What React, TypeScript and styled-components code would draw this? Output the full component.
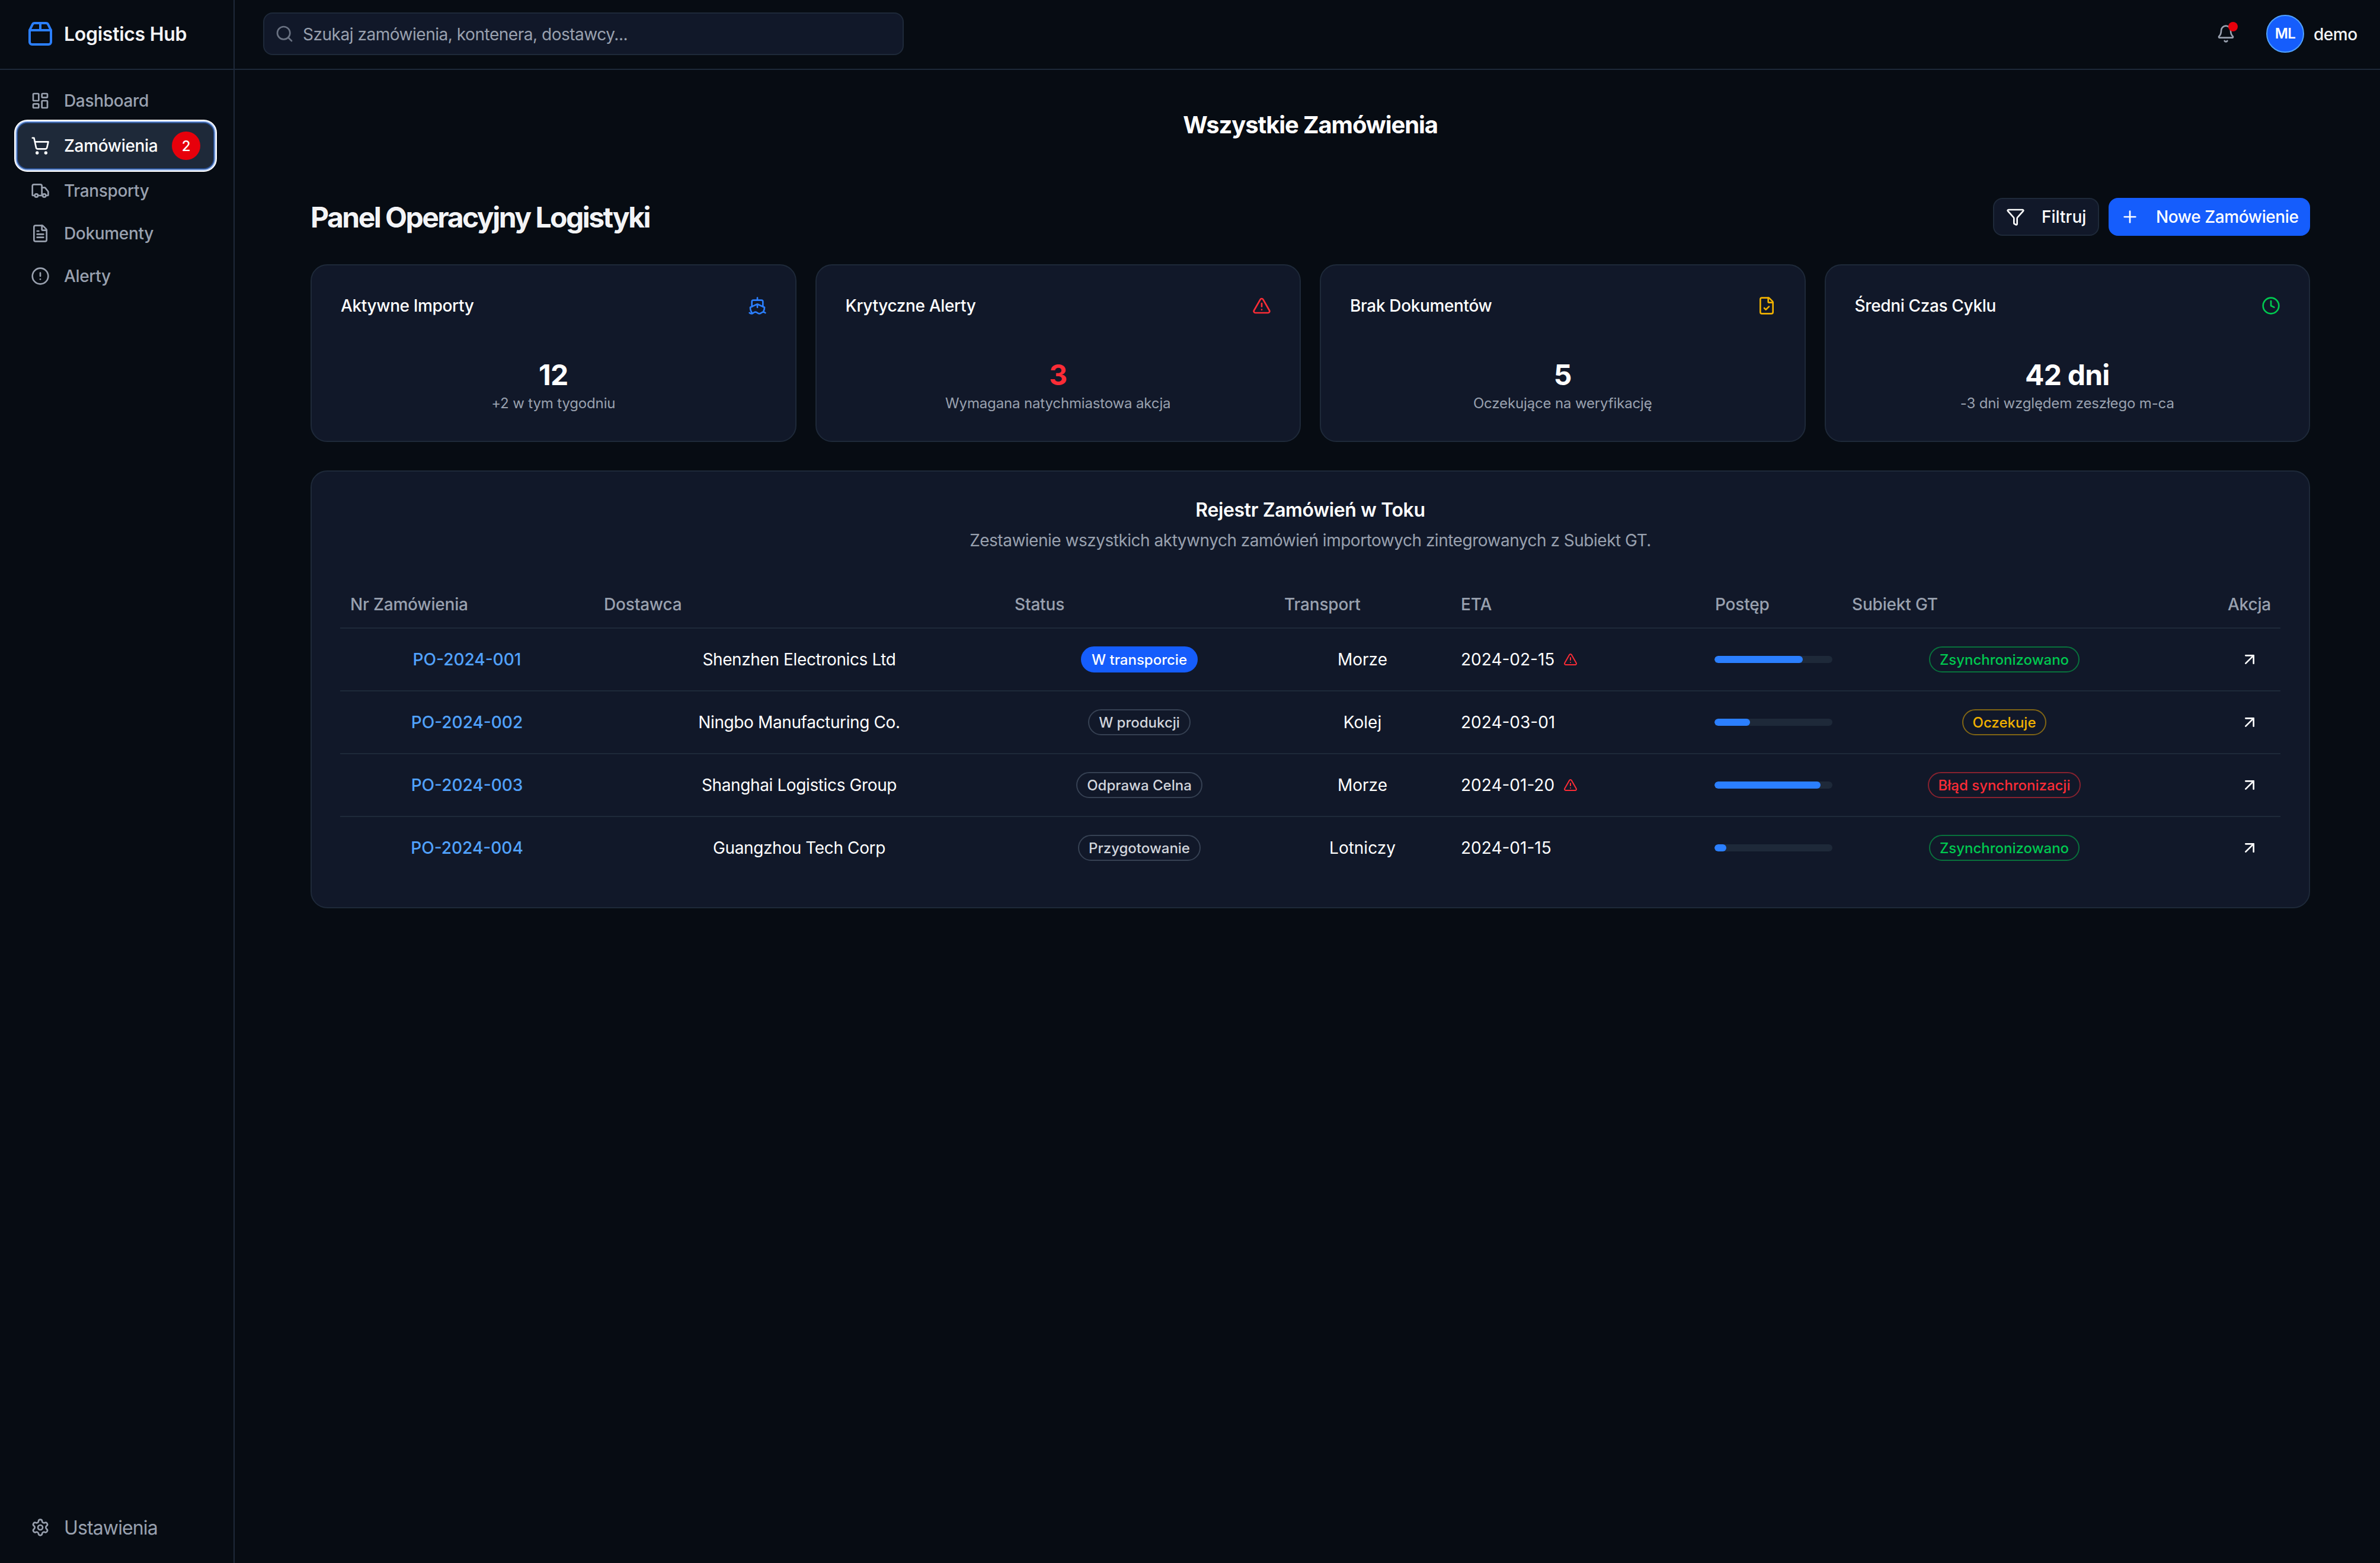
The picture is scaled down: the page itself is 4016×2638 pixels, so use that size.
import {
  AlertCircle,
  ArrowUpRight,
  Bell,
  Clock,
  FileCheck,
  FileText,
  Funnel,
  LayoutDashboard,
  Package2,
  Plus,
  Search,
  Settings,
  Ship,
  ShoppingCart,
  TriangleAlert,
  Truck,
} from 'lucide-react';
import type { LucideIcon } from 'lucide-react';
import { createGlobalStyle, css, styled } from 'styled-components';

const colors = {
  background: '#070c13',
  card: '#111829',
  border: '#1e2939',
  text: '#ffffff',
  muted: '#99a1af',
  primary: '#155dfc',
  blue: '#2b7fff',
  link: '#51a2ff',
  red: '#fb2c36',
  danger: '#e7000b',
  yellow: '#f0b100',
  green: '#00c950',
};

const GlobalStyle = createGlobalStyle`
  * {
    box-sizing: border-box;
  }

  body {
    margin: 0;
    background-color: ${colors.background};
    color: ${colors.text};
    font-family: Inter, 'Liberation Sans', sans-serif;
    font-size: 28px;
    line-height: 40px;
  }

  h1, h2, h3, p {
    margin: 0;
  }

  svg {
    flex-shrink: 0;
    display: block;
  }
`;

const Layout = styled.div`
  display: flex;
  height: 100vh;
`;

/* sidebar */

const Sidebar = styled.aside`
  display: flex;
  flex-direction: column;
  width: 396px;
  border-right: 2px solid ${colors.border};
`;

const Brand = styled.div`
  display: flex;
  align-items: center;
  gap: 16px;
  height: 118px;
  padding: 0 44px 2px;
  border-bottom: 2px solid ${colors.border};
  font-size: 32px;
  font-weight: 600;
  line-height: 42px;
  letter-spacing: -0.28px;
  color: #f3f4f6;
  white-space: nowrap;

  svg {
    color: ${colors.blue};
  }

  span {
    padding-top: 1px;
  }
`;

const Nav = styled.nav`
  flex: 1;
  display: flex;
  flex-direction: column;
  gap: 8px;
  padding: 20px 34px 0 30px;
`;

const NavItem = styled.a<{ $active?: boolean }>`
  display: flex;
  align-items: center;
  gap: 24px;
  height: 64px;
  padding: 0 22px;
  border-radius: 16px;
  font-weight: 500;
  letter-spacing: -0.34px;
  color: ${colors.muted};

  ${({ $active }) =>
    $active &&
    css`
      height: 76px;
      margin: -2px 0;
      background-color: ${colors.border};
      color: ${colors.text};
      box-shadow:
        0 0 0 2px #2d5597,
        0 0 0 4px #a8c4f8,
        0 0 0 6px #ffffff;
    `}
`;

const NavCount = styled.span`
  display: flex;
  justify-content: center;
  align-items: center;
  width: 48px;
  height: 48px;
  padding-top: 1px;
  margin-left: auto;
  border-radius: 50%;
  background-color: ${colors.danger};
  color: #fff;
  font-size: 24px;
  letter-spacing: 0;
`;

const SidebarFooter = styled.div`
  padding: 0 34px 28px 30px;

  ${NavItem} {
    font-size: 32px;
    font-weight: 400;
    letter-spacing: -0.87px;
  }

  span {
    padding-top: 2px;
  }
`;

/* top bar */

const Content = styled.div`
  flex: 1;
  display: flex;
  flex-direction: column;
`;

const TopBar = styled.header`
  display: flex;
  justify-content: space-between;
  align-items: center;
  height: 118px;
  padding: 0 36px 2px 48px;
  border-bottom: 2px solid ${colors.border};
`;

const SearchBox = styled.label`
  display: flex;
  align-items: center;
  gap: 15px;
  width: 1081px;
  height: 72px;
  padding: 0 18px;
  border: 2px solid ${colors.border};
  border-radius: 16px;
  background-color: ${colors.card};
  color: #6a7282;

  input {
    flex: 1;
    height: 42px;
    padding: 2px 0 0;
    border: none;
    outline: none;
    background: none;
    color: ${colors.text};
    font: inherit;
    letter-spacing: -0.47px;

    &::placeholder {
      color: ${colors.muted};
    }
  }
`;

const User = styled.div`
  display: flex;
  align-items: center;
  gap: 16px;
  font-weight: 500;
  letter-spacing: -0.5px;
  color: #f3f4f6;
`;

const UserName = styled.span`
  width: 76px;
  padding-top: 1px;
`;

const Notifications = styled.div`
  position: relative;
  margin-right: 36px;
  color: ${colors.muted};

  &::after {
    content: '';
    position: absolute;
    top: -4px;
    right: -4px;
    width: 16px;
    height: 16px;
    border-radius: 50%;
    background-color: ${colors.danger};
  }
`;

const Avatar = styled.div`
  display: flex;
  justify-content: center;
  align-items: center;
  width: 64px;
  height: 64px;
  border: 2px solid ${colors.link};
  border-radius: 50%;
  background-color: ${colors.primary};
  color: #fff;
  font-size: 24px;
  font-weight: 600;
`;

/* page */

const Main = styled.main`
  padding: 63px 118px 0 128px;
`;

const PageTitle = styled.h1`
  margin-bottom: 93px;
  font-size: 40px;
  font-weight: 700;
  line-height: 60px;
  letter-spacing: -1.12px;
  text-align: center;
`;

const PanelHeader = styled.div`
  display: flex;
  justify-content: space-between;
  align-items: center;
  height: 64px;
  margin-bottom: 48px;
`;

const PanelTitle = styled.h2`
  font-size: 48px;
  font-weight: 700;
  line-height: 64px;
  letter-spacing: -2.53px;
  padding-top: 2px;
  color: #f3f4f6;
`;

const Actions = styled.div`
  display: flex;
  gap: 16px;
`;

const Button = styled.button<{ $primary?: boolean }>`
  display: flex;
  align-items: center;
  gap: 28px;
  width: ${({ $primary }) => ($primary ? '340px' : '179px')};
  height: 64px;
  padding: ${({ $primary }) => ($primary ? '0 18px' : '0 20px')};
  border: 2px solid ${({ $primary }) => ($primary ? colors.primary : colors.border)};
  border-radius: 16px;
  background-color: ${({ $primary }) => ($primary ? colors.primary : colors.card)};
  color: #fff;
  font: inherit;
  font-weight: 500;
  letter-spacing: ${({ $primary }) => ($primary ? '-0.4px' : '0')};
  white-space: nowrap;
`;

const Stats = styled.div`
  display: grid;
  grid-template-columns: repeat(4, 1fr);
  gap: 32px;
  margin-bottom: 48px;
`;

const Card = styled.section`
  border: 2px solid ${colors.border};
  border-radius: 28px;
  background-color: ${colors.card};
  padding: 48px;
`;

const StatHeader = styled.div<{ $color: string }>`
  display: flex;
  justify-content: space-between;
  align-items: center;
  height: 40px;
  margin-bottom: 65px;
  padding-left: 1px;
  font-weight: 500;
  letter-spacing: -0.36px;

  svg {
    color: ${({ $color }) => $color};
  }
`;

const StatValue = styled.div<{ $color?: string }>`
  font-size: 48px;
  font-weight: 700;
  line-height: 64px;
  letter-spacing: -0.8px;
  text-align: center;
  color: ${({ $color }) => $color ?? colors.text};
`;

const StatNote = styled.p`
  margin-bottom: -1px;
  font-size: 24px;
  line-height: 32px;
  letter-spacing: -0.15px;
  text-align: center;
  color: ${colors.muted};
`;

const CardTitle = styled.h3`
  margin-bottom: 15px;
  padding-top: 1px;
  font-size: 32px;
  font-weight: 600;
  line-height: 32px;
  letter-spacing: -0.38px;
  text-align: center;
`;

const CardDescription = styled.p`
  margin-bottom: 48px;
  letter-spacing: -0.49px;
  text-align: center;
  color: ${colors.muted};
`;

/* orders table */

const Row = styled.div`
  display: grid;
  grid-template-columns: 428px 693px 455px 298px 429px 231px 548px 1fr;
  align-items: center;
  height: 106px;
  border-bottom: 2px solid ${colors.border};

  &:last-child {
    height: 104px;
    border-bottom: none;
  }
`;

const HeadRow = styled(Row)`
  height: 81px;
  padding-top: 1px;
  color: ${colors.muted};
  font-weight: 500;
  letter-spacing: -0.18px;
`;

const alignments = {
  left: css`
    justify-content: flex-start;
    padding: 0 16px 0 17px;
  `,
  center: css`
    justify-content: center;
    padding: 0 16px;
  `,
  right: css`
    justify-content: flex-end;
    padding: 0 16px;
  `,
};

const Cell = styled.div<{ $align?: keyof typeof alignments }>`
  display: flex;
  align-items: center;
  gap: 15px;
  white-space: nowrap;
  ${({ $align = 'center' }) => alignments[$align]}
`;

const OrderLink = styled.a`
  font-weight: 500;
  color: ${colors.link};
`;

const Supplier = styled.span`
  letter-spacing: -0.38px;
`;

const tones = {
  solid: css`
    border-color: ${colors.primary};
    background-color: ${colors.primary};
    color: #fff;
  `,
  outline: css`
    border-color: #364153;
    color: #d1d5dc;
  `,
  green: css`
    border-color: rgba(0, 201, 80, 0.5);
    color: ${colors.green};
  `,
  yellow: css`
    border-color: rgba(240, 177, 0, 0.5);
    color: ${colors.yellow};
  `,
  red: css`
    border-color: rgba(251, 44, 54, 0.5);
    color: ${colors.red};
  `,
};

type Tone = keyof typeof tones;

const Badge = styled.span<{ $tone: Tone }>`
  height: 44px;
  padding: 5px 16px 3px;
  border: 2px solid;
  border-radius: 22px;
  font-size: 24px;
  font-weight: 500;
  line-height: 32px;
  ${({ $tone }) => tones[$tone]}
`;

const ProgressTrack = styled.div`
  width: 200px;
  height: 12px;
  margin-left: -1px;
  border-radius: 6px;
  background-color: ${colors.border};
  overflow: hidden;
`;

const ProgressBar = styled.div`
  height: 100%;
  border-radius: 6px;
  background-color: ${colors.blue};
`;

const IconButton = styled.button`
  display: flex;
  justify-content: center;
  align-items: center;
  width: 72px;
  height: 72px;
  padding: 0;
  border: none;
  background: none;
  color: #fff;
`;

const navItems: { label: string; icon: LucideIcon; count?: number }[] = [
  { label: 'Dashboard', icon: LayoutDashboard },
  { label: 'Zamówienia', icon: ShoppingCart, count: 2 },
  { label: 'Transporty', icon: Truck },
  { label: 'Dokumenty', icon: FileText },
  { label: 'Alerty', icon: AlertCircle },
];

const stats: { title: string; value: string; note: string; icon: LucideIcon; color: string; valueColor?: string }[] = [
  { title: 'Aktywne Importy', value: '12', note: '+2 w tym tygodniu', icon: Ship, color: colors.blue },
  {
    title: 'Krytyczne Alerty',
    value: '3',
    note: 'Wymagana natychmiastowa akcja',
    icon: TriangleAlert,
    color: colors.red,
    valueColor: colors.red,
  },
  { title: 'Brak Dokumentów', value: '5', note: 'Oczekujące na weryfikację', icon: FileCheck, color: colors.yellow },
  { title: 'Średni Czas Cyklu', value: '42 dni', note: '-3 dni względem zeszłego m-ca', icon: Clock, color: colors.green },
];

interface Order {
  id: string;
  supplier: string;
  status: string;
  transport: string;
  eta: string;
  late?: boolean;
  progress: number;
  sync: 'ok' | 'pending' | 'error';
}

const orders: Order[] = [
  {
    id: 'PO-2024-001',
    supplier: 'Shenzhen Electronics Ltd',
    status: 'W transporcie',
    transport: 'Morze',
    eta: '2024-02-15',
    late: true,
    progress: 75,
    sync: 'ok',
  },
  {
    id: 'PO-2024-002',
    supplier: 'Ningbo Manufacturing Co.',
    status: 'W produkcji',
    transport: 'Kolej',
    eta: '2024-03-01',
    progress: 30,
    sync: 'pending',
  },
  {
    id: 'PO-2024-003',
    supplier: 'Shanghai Logistics Group',
    status: 'Odprawa Celna',
    transport: 'Morze',
    eta: '2024-01-20',
    late: true,
    progress: 90,
    sync: 'error',
  },
  {
    id: 'PO-2024-004',
    supplier: 'Guangzhou Tech Corp',
    status: 'Przygotowanie',
    transport: 'Lotniczy',
    eta: '2024-01-15',
    progress: 10,
    sync: 'ok',
  },
];

const syncLabels: Record<Order['sync'], { label: string; tone: Tone }> = {
  ok: { label: 'Zsynchronizowano', tone: 'green' },
  pending: { label: 'Oczekuje', tone: 'yellow' },
  error: { label: 'Błąd synchronizacji', tone: 'red' },
};

const OrdersTable = () => {
  return (
    <div>
      <HeadRow>
        <Cell $align="left">Nr Zamówienia</Cell>
        <Cell $align="left">Dostawca</Cell>
        <Cell $align="left">Status</Cell>
        <Cell $align="left">Transport</Cell>
        <Cell $align="left">ETA</Cell>
        <Cell $align="left">Postęp</Cell>
        <Cell $align="left">Subiekt GT</Cell>
        <Cell $align="right">Akcja</Cell>
      </HeadRow>
      {orders.map((order) => (
        <Row key={order.id}>
          <Cell>
            <OrderLink>{order.id}</OrderLink>
          </Cell>
          <Cell>
            <Supplier>{order.supplier}</Supplier>
          </Cell>
          <Cell>
            <Badge $tone={order.status === 'W transporcie' ? 'solid' : 'outline'}>{order.status}</Badge>
          </Cell>
          <Cell>{order.transport}</Cell>
          <Cell $align="left">
            {order.eta}
            {order.late && <TriangleAlert size={24} color={colors.red} />}
          </Cell>
          <Cell $align="left">
            <ProgressTrack>
              <ProgressBar style={{ width: `${order.progress}%` }} />
            </ProgressTrack>
          </Cell>
          <Cell>
            <Badge $tone={syncLabels[order.sync].tone}>{syncLabels[order.sync].label}</Badge>
          </Cell>
          <Cell $align="right">
            <IconButton>
              <ArrowUpRight size={32} />
            </IconButton>
          </Cell>
        </Row>
      ))}
    </div>
  );
};

const App = () => {
  return (
    <Layout>
      <GlobalStyle />
      <Sidebar>
        <Brand>
          <Package2 size={48} />
          <span>Logistics Hub</span>
        </Brand>
        <Nav>
          {navItems.map(({ label, icon: Icon, count }) => (
            <NavItem key={label} $active={label === 'Zamówienia'}>
              <Icon size={32} />
              {label}
              {count && <NavCount>{count}</NavCount>}
            </NavItem>
          ))}
        </Nav>
        <SidebarFooter>
          <NavItem>
            <Settings size={32} />
            <span>Ustawienia</span>
          </NavItem>
        </SidebarFooter>
      </Sidebar>
      <Content>
        <TopBar>
          <SearchBox>
            <Search size={32} />
            <input placeholder="Szukaj zamówienia, kontenera, dostawcy..." />
          </SearchBox>
          <User>
            <Notifications>
              <Bell size={32} />
            </Notifications>
            <Avatar>ML</Avatar>
            <UserName>demo</UserName>
          </User>
        </TopBar>
        <Main>
          <PageTitle>Wszystkie Zamówienia</PageTitle>
          <PanelHeader>
            <PanelTitle>Panel Operacyjny Logistyki</PanelTitle>
            <Actions>
              <Button>
                <Funnel size={32} />
                Filtruj
              </Button>
              <Button $primary>
                <Plus size={32} />
                Nowe Zamówienie
              </Button>
            </Actions>
          </PanelHeader>
          <Stats>
            {stats.map(({ title, value, note, icon: Icon, color, valueColor }) => (
              <Card key={title}>
                <StatHeader $color={color}>
                  {title}
                  <Icon size={32} />
                </StatHeader>
                <StatValue $color={valueColor}>{value}</StatValue>
                <StatNote>{note}</StatNote>
              </Card>
            ))}
          </Stats>
          <Card>
            <CardTitle>Rejestr Zamówień w Toku</CardTitle>
            <CardDescription>
              Zestawienie wszystkich aktywnych zamówień importowych zintegrowanych z Subiekt GT.
            </CardDescription>
            <OrdersTable />
          </Card>
        </Main>
      </Content>
    </Layout>
  );
};

export default App;
